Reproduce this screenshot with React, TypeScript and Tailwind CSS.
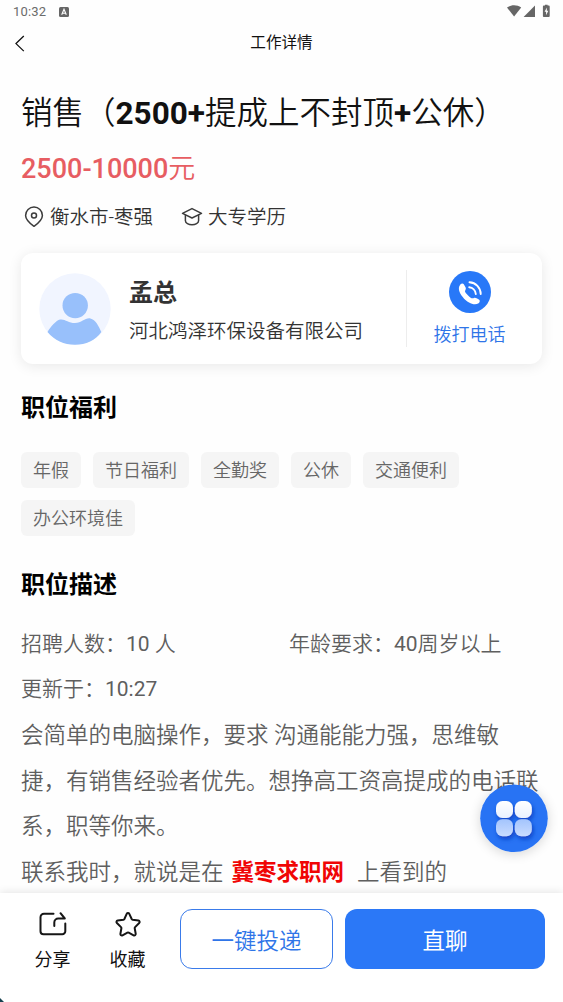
import React from "react";

const benefits = ["年假", "节日福利", "全勤奖", "公休", "交通便利", "办公环境佳"];

function StatusBar() {
  return (
    <div className="flex h-6 items-center justify-between pl-[13px] pr-3 text-[#6b6b6b]">
      <div className="flex items-center gap-3">
        <span className="text-[13px] font-normal leading-6 tracking-[0.2px]">10:32</span>
        <svg className="ml-px size-[10px]" viewBox="0 0 10 10">
          <rect width="10" height="10" rx="1.5" fill="#666" />
          <path d="M2.7 7.8 5 2.2l2.3 5.6M3.6 6.2h2.8" fill="none" stroke="#fff" strokeWidth="1.1" />
        </svg>
      </div>
      <svg className="-mt-[2px] h-[14px] w-[44px]" viewBox="0 0 44 14" fill="#666">
        <path d="M0 3.6C4.2.6 10 .6 14.200 3.600L7.100 12.600Z" />
        <path d="M28 1.600V13H16.600Z" />
        <path d="M36.800 1.600h1.200V.8h2.600v.8h1.200c.6 0 .9.3.9.9v9.600c0 .6-.3.9-.9.9h-5c-.6 0-.9-.3-.9-.9V2.500c0-.6.3-.9.9-.9Z" />
        <path d="m39.800 3.500-2.200 4.200h1.500v3.500l2.200-4.400h-1.500Z" fill="#fff" />
      </svg>
    </div>
  );
}

function NavBar() {
  return (
    <div className="grid h-[38px] grid-cols-[1fr_auto_1fr] items-center px-[15px]">
      <svg className="h-[17px] w-[10px]" viewBox="0 0 10 17" fill="none" stroke="#111" strokeWidth="1.3">
        <path d="M8.800 1 1 8.600l7.800 7.500" />
      </svg>
      <h1 className="text-[15.6px] font-normal leading-6 text-[#111]">工作详情</h1>
      <span />
    </div>
  );
}

function PinIcon() {
  return (
    <svg className="-mt-[2px] h-[22px] w-5" viewBox="0 0 20 22" fill="none" stroke="#3c3c3c" strokeWidth="1.5">
      <path d="M10 20.300C5.500 17 1.600 13.500 1.600 9.400a8.400 8.400 0 0 1 16.800 0c0 4.100-3.900 7.600-8.400 10.900Z" strokeLinejoin="round" />
      <circle cx="10" cy="9.500" r="2.500" />
    </svg>
  );
}

function CapIcon() {
  return (
    <svg className="-mt-[2px] h-[20px] w-[22px]" viewBox="0 0 22 20" fill="none" stroke="#3c3c3c" strokeWidth="1.500" strokeLinejoin="round" strokeLinecap="round">
      <path d="M11 1.600 20.500 6.300 11 11 1.500 6.300Z" />
      <path d="M4.400 8.300v5.400c0 2.400 3.200 4 6.600 4s6.600-1.600 6.600-4V8.300" />
    </svg>
  );
}

function ContactCard() {
  return (
    <section className="mt-[21px] flex h-[111px] items-center rounded-xl bg-white pl-[18px] shadow-[0_2px_14px_rgba(0,0,0,0.09)]">
      <svg className="size-[72px] shrink-0" viewBox="0 0 72 72">
        <circle cx="36" cy="36" r="35.700" fill="#f1f5ff" />
        <circle cx="36.200" cy="32.600" r="12.700" fill="#98c0fb" />
        <path d="M8.500 59c3.500-5.600 8.500-11.400 12.500-12.400 4.700-1.100 8.200 3.400 15 3.400s10.300-5.600 15.400-4.600c5.100 1.100 8.600 8 10.900 13.600C56.500 67.500 47 71.700 36 71.700S15.500 67.500 8.500 59Z" fill="#98c0fb" />
      </svg>
      <div className="ml-[18px] flex-1 pt-[7px]">
        <div className="text-[24px] font-bold leading-9 text-[#333]">孟总</div>
        <div className="mt-[3px] whitespace-nowrap text-[19.500px] leading-9 text-[#333]">河北鸿泽环保设备有限公司</div>
      </div>
      <button className="flex h-[77px] w-[136px] flex-col items-center border-l border-[#ededed] pr-[10px]">
        <svg className="mt-px size-[42px] shrink-0" viewBox="0 0 42 42">
          <circle cx="21" cy="21" r="21" fill="#2878f8" />
          <path d="M11.300 13.600c1.300-1.500 2.700-1.500 3.500-.3l1.700 3c.6 1 .4 1.900-.2 2.900-.8 1.300.1 2.400 1.400 3.900 1.500 1.600 3.300 3.400 4.800 4.100 1.200.5 2-.3 3-.5 1.200-.2 3.900 1.200 4.700 2 1 1 .6 2.700-.6 3.500-4.400 2.800-10.900-.7-14.500-4.500-3.500-3.700-7.400-9.800-3.800-14.100Z" fill="#fff" />
          <path d="M20.200 16.200a7.600 7.600 0 0 1 6.600 6.800M20.500 11.300A11.800 11.800 0 0 1 31.700 23" fill="none" stroke="#fff" strokeWidth="1.900" strokeLinecap="round" />
        </svg>
        <span className="mt-2 text-[18px] leading-[27px] text-[#2f75e8]">拨打电话</span>
      </button>
    </section>
  );
}

function MenuBubble() {
  return (
    <button className="absolute left-[480px] top-[784px] size-[68px] rounded-full shadow-[0_2px_12px_rgba(0,0,0,0.16)]" aria-label="菜单">
      <svg className="size-[68px]" viewBox="0 0 68 68">
        <defs>
          <linearGradient id="tileTop" x1="0" y1="0" x2="0" y2="1">
            <stop offset="0" stopColor="#ffffff" />
            <stop offset="1" stopColor="#eaf1ff" />
          </linearGradient>
          <linearGradient id="tileBottom" x1="0" y1="0" x2="0" y2="1">
            <stop offset="0" stopColor="#a3c4fd" />
            <stop offset="1" stopColor="#c9dcff" />
          </linearGradient>
          <filter id="tileShadow" x="-30%" y="-30%" width="160%" height="170%">
            <feDropShadow dx="1.500" dy="3" stdDeviation="2" floodColor="#0b3fc4" floodOpacity="0.9" />
          </filter>
        </defs>
        <circle cx="34" cy="34.200" r="33.800" fill="#2873f4" />
        <g filter="url(#tileShadow)">
          <rect x="16" y="17" width="17" height="17" rx="6.500" fill="url(#tileTop)" />
          <rect x="34.800" y="17" width="17" height="17" rx="6.500" fill="url(#tileTop)" />
          <rect x="16" y="35.200" width="17" height="17" rx="6.500" fill="url(#tileBottom)" />
          <rect x="34.800" y="35.200" width="17" height="17" rx="6.500" fill="url(#tileBottom)" />
        </g>
      </svg>
    </button>
  );
}

function BottomBar() {
  return (
    <footer className="relative flex h-[109px] shrink-0 items-start bg-white pl-[30px] pr-[18px] pt-4 font-normal shadow-[0_-1px_8px_rgba(0,0,0,0.1)]">
      <button className="flex w-[45px] flex-col items-center">
        <svg className="mt-[2px] h-[26px] w-[30px]" viewBox="0 0 30 26" fill="none" stroke="#161616" strokeWidth="2" strokeLinejoin="round" strokeLinecap="round">
          <path d="M15.500 2.700H6A3.500 3.500 0 0 0 2.500 6.200v14A3 3 0 0 0 5.500 23.200h18.800a3 3 0 0 0 3-3V12.500" />
          <path d="M16.300 15V11.500a4 4 0 0 1 4-4h6.500L22.500 2.200" />
        </svg>
        <span className="mt-[9px] text-[18px] leading-[27px] text-[#111]">分享</span>
      </button>
      <button className="ml-[30px] flex w-[45px] flex-col items-center">
        <svg className="mt-[2px] h-[26px] w-[28px]" viewBox="0 0 28 26" fill="none" stroke="#161616" strokeWidth="2" strokeLinejoin="round">
          <path d="M12.700 2.800c.5-1.100 2.100-1.100 2.600 0l2.400 5.200c.2.400.6.700 1 .8l5.700.7c1.200.2 1.700 1.600.8 2.500l-4.100 4.100c-.3.300-.5.800-.4 1.200l1 5.500c.2 1.200-1 2.100-2.100 1.500l-4.900-2.600c-.4-.2-.9-.2-1.300 0l-4.900 2.600c-1.100.6-2.300-.3-2.100-1.500l1-5.500c.1-.4-.1-.9-.4-1.200L2.900 12c-.9-.9-.4-2.300.8-2.500l5.700-.7c.4-.1.800-.4 1-.8Z" />
        </svg>
        <span className="mt-[9px] text-[18px] leading-[27px] text-[#111]">收藏</span>
      </button>
      <button className="ml-[30px] h-[60px] w-[153px] rounded-xl border border-[#3a7bea] pt-[5px] text-[22.500px] font-[350] text-[#2f75e8]">一键投递</button>
      <button className="ml-3 h-[60px] flex-1 rounded-xl bg-[#2b78f7] pt-[5px] text-[22.500px] text-white">直聊</button>
      <svg className="absolute bottom-0 left-0 h-1 w-1" viewBox="0 0 4 4">
        <path d="M0 0 4 4H0Z" fill="#16414f" />
      </svg>
    </footer>
  );
}

export default function App() {
  return (
    <div className="relative flex h-[1002px] w-[563px] flex-col overflow-hidden bg-[#fefefe] font-[Roboto,'Noto_Sans_CJK_SC',sans-serif] font-[350]" lang="zh-CN">
      <StatusBar />
      <NavBar />
      <main className="min-h-0 flex-1 overflow-hidden px-[21px] pt-[28px]">
        <h2 className="whitespace-nowrap text-[31.500px] font-[350] leading-[48px] text-[#111]">
          销售（<span className="font-bold">2500+</span>提成上不封顶<span className="font-bold">+</span>公休）
        </h2>
        <div className="mt-[11px] whitespace-nowrap text-[27px] leading-10 text-[#e75d62]">
          <span className="font-medium">2500-10000</span>元
        </div>
        <div className="mt-[14px] flex items-center text-[19.500px] leading-[29px] text-[#333]">
          <span className="ml-[3px] flex items-center gap-[6px]"><PinIcon />衡水市-枣强</span>
          <span className="ml-[28px] flex items-center gap-[5px]"><CapIcon />大专学历</span>
        </div>
        <ContactCard />
        <h3 className="mt-[26px] text-[24px] font-bold leading-9 text-black">职位福利</h3>
        <ul className="mt-[26px] flex flex-wrap gap-3">
          {benefits.map((name) => (
            <li key={name} className="h-9 rounded-md bg-[#f5f5f5] px-3 text-[18px] leading-[38px] text-[#666]">{name}</li>
          ))}
        </ul>
        <h3 className="mt-[31px] text-[24px] font-bold leading-9 text-black">职位描述</h3>
        <div className="mt-[19px] flex text-[21px] leading-[45px] text-[#5f5f5f]">
          <span className="w-[268px]">招聘人数：<span className="font-normal">10</span> 人</span>
          <span>年龄要求：<span className="font-normal">40</span>周岁以上</span>
        </div>
        <div className="text-[21px] leading-[45px] text-[#5f5f5f]">更新于：<span className="font-normal">10:27</span></div>
        <div className="mt-px whitespace-nowrap text-[22.500px] leading-[45.500px] text-[#5f5f5f]">
          <p>会简单的电脑操作，要求 沟通能能力强，思维敏<br />捷，有销售经验者优先。想挣高工资高提成的电话联<br />系，职等你来。</p>
          <p>联系我时，就说是在<b className="ml-2 mr-[13px] text-[#f00505]">冀枣求职网</b>上看到的</p>
        </div>
      </main>
      <BottomBar />
      <MenuBubble />
    </div>
  );
}
